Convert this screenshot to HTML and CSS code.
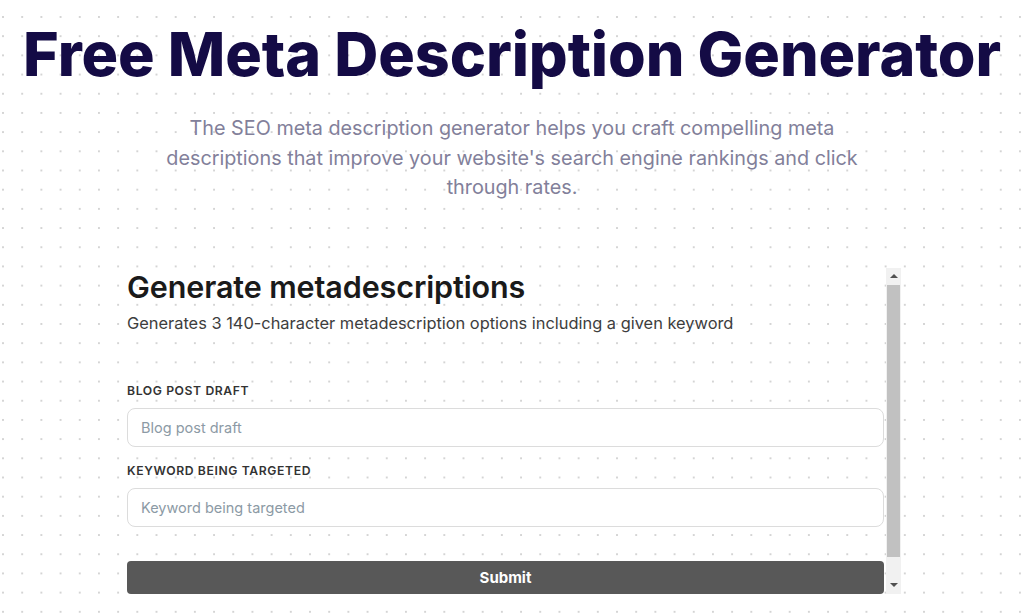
FILE: index.html
```html
<html>
	<head>
		<meta charset="utf-8" />
		<title>Free Meta Description Generator</title>
		<meta name="viewport" content="width=device-width, initial-scale=1.0" />
		<link rel="stylesheet" href="styles.css">
	</head>

	<body>
		<div class="hero">
			<h1 class="title">Free Meta Description Generator</h1>
			<p class="lead">The SEO meta description generator helps you craft compelling meta descriptions that improve your website's search engine rankings and click through rates.</p>
		</div>
		<div class="tool">
			<div class="tool_inner">
				<h2 class="tool_title">Generate metadescriptions</h2>
				<p class="tool_desc">Generates 3 140-character metadescription options including a given keyword</p>
				<form class="form">
					<label class="field">
						<span class="field_label">Blog post draft</span>
						<input class="field_input" type="text" placeholder="Blog post draft">
					</label>
					<label class="field">
						<span class="field_label">Keyword being targeted</span>
						<input class="field_input" type="text" placeholder="Keyword being targeted">
					</label>
					<button class="submit" type="button">Submit</button>
				</form>
			</div>
			<!--frame scrollbar-->
			<div class="scrollbar">
				<div class="scroll_btn"><span class="arrow_up"></span></div>
				<div class="scroll_track"><div class="scroll_thumb"></div></div>
				<div class="scroll_btn"><span class="arrow_down"></span></div>
			</div>
		</div>
	</body>
</html>
```

FILE: styles.css
```css
	* {margin: 0; padding: 0; box-sizing: border-box;}
	html, body {height: 100%; overflow: hidden;}
	body {font-family: Inter, "Noto Sans", sans-serif; color: #1a1a1a; background-color: #fff; background-image: radial-gradient(circle, #d4d4d4 0.9px, transparent 1.4px); background-size: 19.2px 19.2px; background-position: -6.6px 7.4px;}
/*hero*/
	.hero {display: flex; flex-direction: column; align-items: center; padding-top: 18px;}
	.title {font-size: 61px; font-weight: 800; line-height: 72px; color: #140b45; letter-spacing: -0.1px; white-space: nowrap;}
	.lead {max-width: 700px; margin-top: 24px; font-size: 19.8px; font-weight: 400; line-height: 29.5px; color: #82809a; text-align: center;}
/*tool*/
	.tool {display: flex; width: 774px; height: 326px; margin: 65px 0 0 calc(50% - 385px); overflow: hidden;}
	.tool_inner {flex: 1; min-width: 0; padding: 1px 2px 24px 0;}
	.tool_title {font-size: 30.5px; font-weight: 600; line-height: 36px; color: #1a1a1a; letter-spacing: -0.1px;}
	.tool_desc {margin-top: 6px; font-size: 16.4px; line-height: 24px; color: #3d3d3d;}
/*scrollbar*/
	.scrollbar {display: flex; flex-direction: column; flex: 0 0 15px; background: #f1f1f1;}
	.scroll_btn {display: flex; align-items: center; justify-content: center; height: 17px;}
	.arrow_up {width: 0; height: 0; border-left: 4px solid transparent; border-right: 4px solid transparent; border-bottom: 4px solid #505050;}
	.arrow_down {width: 0; height: 0; border-left: 4px solid transparent; border-right: 4px solid transparent; border-top: 4px solid #505050;}
	.scroll_track {flex: 1; padding: 0 1px;}
	.scroll_thumb {height: 272px; background: #c1c1c1;}
/*form*/
	.form {display: flex; flex-direction: column; gap: 16px; margin-top: 48px;}
	.field {display: flex; flex-direction: column; gap: 9px;}
	.field_label {font-size: 12.2px; font-weight: 600; line-height: 16px; letter-spacing: 0.6px; text-transform: uppercase; color: #333;}
	.field_input {height: 39px; padding: 0 13px; border: 1px solid #dcdcdc; border-radius: 8px; background: #fff; font-family: Inter, sans-serif; font-size: 14.5px; color: #333; outline: none;}
	.field_input::placeholder {color: #8c9aa5;}
	.submit {height: 33px; margin-top: 18px; border: none; border-radius: 4px; background: #585858; color: #fff; font-family: Inter, sans-serif; font-size: 15px; font-weight: 700;}
```
